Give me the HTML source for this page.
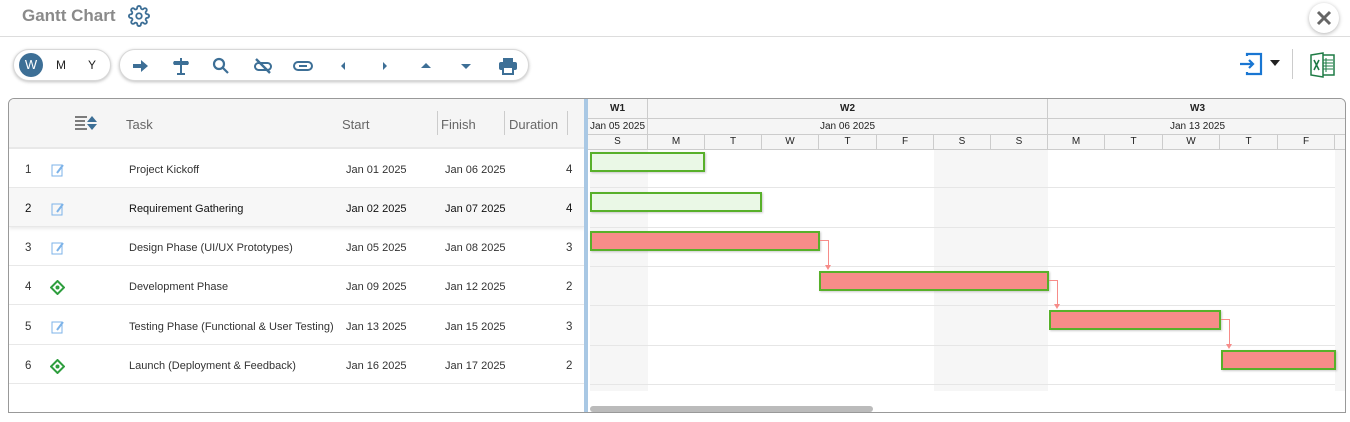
<!DOCTYPE html>
<html><head><meta charset="utf-8"><style>
*{box-sizing:border-box;margin:0;padding:0}
body{width:1350px;height:422px;background:#fff;font-family:"Liberation Sans",sans-serif;position:relative;overflow:hidden;color:#333}
.abs{position:absolute}
.title{left:22px;top:6px;font-size:17px;font-weight:bold;color:#8a8a8a}
.hline{left:0;top:36px;width:1350px;height:1px;background:#ddd}
.pill{top:49px;height:32px;border:1px solid #d8d8d8;border-radius:16px;box-shadow:0 1px 3px rgba(0,0,0,.25);background:#fff}
.ic{position:absolute;top:7px}
.grid{left:8px;top:98px;width:1338px;height:315px;border:1px solid #999;border-radius:6px 6px 0 0;overflow:hidden}
.lhdr{left:0;top:0;width:576px;height:50px;background:#f5f5f5;border-bottom:2px solid #e8e8e8}
.hd{position:absolute;top:18px;font-size:13px;color:#666}
.row{position:absolute;left:0;width:576px;height:39px;border-bottom:1px solid #e8e8e8;font-size:11.5px;color:#333}
.row span{position:absolute;top:15px}
.row span.t{font-size:11px;top:15px}
.ch{position:absolute;font-size:10px;color:#222;text-align:center;border-right:1px solid #ccc;border-bottom:1px solid #ccc;background:#f5f5f5}
.bar{position:absolute;height:20px;border:2px solid #58b02a;box-shadow:1px 1px 2px rgba(0,0,0,.2)}
.g{background:#eaf8e6}.r{background:#f78c89}
.lk{position:absolute;background:#f78c89}
.ah{position:absolute;width:0;height:0;border-left:3px solid transparent;border-right:3px solid transparent;border-top:5px solid #f78c89}
</style></head><body>
<div class="abs title">Gantt Chart</div>
<svg class="abs" style="left:128px;top:5px" width="22" height="22" viewBox="0 0 24 24" fill="none" stroke="#3d6f96" stroke-width="2"><circle cx="12" cy="12" r="3"/><path d="M19.4 15a1.7 1.7 0 0 0 .3 1.8l.1.1a2 2 0 1 1-2.8 2.8l-.1-.1a1.7 1.7 0 0 0-1.8-.3 1.7 1.7 0 0 0-1 1.5V21a2 2 0 1 1-4 0v-.1a1.7 1.7 0 0 0-1.1-1.5 1.7 1.7 0 0 0-1.8.3l-.1.1a2 2 0 1 1-2.8-2.8l.1-.1a1.7 1.7 0 0 0 .3-1.8 1.7 1.7 0 0 0-1.5-1H3a2 2 0 1 1 0-4h.1a1.7 1.7 0 0 0 1.5-1.100 1.7 1.7 0 0 0-.3-1.8l-.1-.1a2 2 0 1 1 2.8-2.8l.1.1a1.7 1.7 0 0 0 1.8.3H9a1.7 1.7 0 0 0 1-1.5V3a2 2 0 1 1 4 0v.1a1.7 1.7 0 0 0 1 1.5 1.7 1.7 0 0 0 1.8-.3l.1-.1a2 2 0 1 1 2.8 2.8l-.1.1a1.7 1.7 0 0 0-.3 1.8V9a1.7 1.7 0 0 0 1.5 1H21a2 2 0 1 1 0 4h-.1a1.7 1.7 0 0 0-1.5 1z"/></svg>
<div class="abs" style="left:1309px;top:3px;width:30px;height:30px;border-radius:15px;background:#fff;box-shadow:0 1px 4px rgba(0,0,0,.3)"><svg width="30" height="30"><path d="M9 9l12 12M21 9L9 21" stroke="#666" stroke-width="3"/></svg></div>
<div class="abs hline"></div>

<div class="abs pill" style="left:13px;width:98px">
<div class="abs" style="left:5px;top:3px;width:24px;height:24px;border-radius:12px;background:#3d6f96;color:#fff;font-size:13px;text-align:center;line-height:24px">W</div>
<div class="abs" style="left:42px;top:8px;font-size:12px;color:#222">M</div>
<div class="abs" style="left:74px;top:8px;font-size:12px;color:#222">Y</div>
</div>
<div class="abs pill" style="left:119px;width:410px">
<svg class="ic" style="left:12px" width="18" height="18" viewBox="0 0 18 18"><path d="M1 7h8V3l7 6-7 6v-4H1z" fill="#3d6f96"/></svg>
<svg class="ic" style="left:52px" width="18" height="18" viewBox="0 0 18 18"><path d="M8 1h2v3h6l1 2-1 2h-6v9H8V8H2L1 6l1-2h6z" fill="#3d6f96"/><rect x="5" y="16" width="8" height="2" fill="#3d6f96"/></svg>
<svg class="ic" style="left:92px" width="18" height="18" viewBox="0 0 18 18" fill="none" stroke="#3d6f96" stroke-width="2.2"><circle cx="7" cy="7" r="5"/><path d="M11 11l5 5"/></svg>
<svg class="ic" style="left:133px" width="20" height="18" viewBox="0 0 20 18" fill="none" stroke="#3d6f96" stroke-width="2"><rect x="2" y="6" width="16" height="7" rx="3.5"/><path d="M3 2l14 14" stroke-width="2.4"/></svg>
<svg class="ic" style="left:173px" width="20" height="18" viewBox="0 0 20 18" fill="none" stroke="#3d6f96" stroke-width="2"><rect x="1" y="5" width="18" height="8" rx="4"/><path d="M6 9h8"/></svg>
<svg class="ic" style="left:219px" width="8" height="18"><path d="M6 5v8L2 9z" fill="#3d6f96"/></svg>
<svg class="ic" style="left:261px" width="8" height="18"><path d="M2 5v8l4-4z" fill="#3d6f96"/></svg>
<svg class="ic" style="left:300px" width="12" height="18"><path d="M1 11h10L6 6z" fill="#3d6f96"/></svg>
<svg class="ic" style="left:340px" width="12" height="18"><path d="M1 7h10l-5 5z" fill="#3d6f96"/></svg>
<svg class="ic" style="left:378px" width="20" height="18" viewBox="0 0 20 18"><rect x="5" y="1" width="10" height="4" fill="#3d6f96"/><rect x="1" y="5" width="18" height="8" rx="2" fill="#3d6f96"/><rect x="5" y="10" width="10" height="7" fill="#fff" stroke="#3d6f96" stroke-width="2"/></svg>
</div>

<svg class="abs" style="left:1238px;top:52px" width="26" height="24" viewBox="0 0 26 24" fill="none" stroke="#1976d2" stroke-width="2.2"><path d="M9 4V2h14v20H9v-2"/><path d="M2 12h13M11 8l4 4-4 4"/></svg>
<svg class="abs" style="left:1269px;top:59px" width="12" height="8"><path d="M1 1h10L6 7z" fill="#222"/></svg>
<div class="abs" style="left:1292px;top:49px;width:1px;height:30px;background:#ccc"></div>
<svg class="abs" style="left:1310px;top:52px" width="26" height="26" viewBox="0 0 26 26"><rect x="8" y="3" width="16" height="20" fill="#fff" stroke="#1e7b45" stroke-width="1.5"/><path d="M16 6v14M11 8h12M11 11h12M11 14h12M11 17h12" stroke="#1e7b45" stroke-width="1"/><path d="M1 3l12-2v24L1 23z" fill="#fff" stroke="#1e7b45" stroke-width="1.5"/><path d="M4 8l5 10M9 8l-5 10" stroke="#1e7b45" stroke-width="1.6"/></svg>

<div class="abs grid">
<div class="abs lhdr">
<svg class="abs" style="left:66px;top:16px" width="22" height="16" viewBox="0 0 22 16"><path d="M0 2h12M0 6h10M0 10h10M0 14h12" stroke="#555" stroke-width="1.5"/><path d="M12 7l5-6 5 6zM12 9l5 6 5-6z" fill="#3d6f96"/></svg>
<div class="hd" style="left:117px">Task</div>
<div class="hd" style="left:333px">Start</div>
<div class="abs" style="left:428px;top:12px;width:1px;height:24px;background:#ccc"></div>
<div class="hd" style="left:432px">Finish</div>
<div class="abs" style="left:495px;top:12px;width:1px;height:24px;background:#ccc"></div>
<div class="hd" style="left:500px">Duration</div>
<div class="abs" style="left:558px;top:12px;width:1px;height:24px;background:#ccc"></div>
</div>
<div class="row" style="top:50px"><span style="left:16px">1</span><svg class="abs" style="left:42px;top:14px" width="14" height="14"><rect x="1" y="2" width="10" height="11" fill="none" stroke="#7db3e8"/><path d="M6 10l6-8" stroke="#7db3e8" stroke-width="2"/></svg><span class="t" style="left:120px">Project Kickoff</span><span class="t" style="left:337px">Jan 01 2025</span><span class="t" style="left:436px">Jan 06 2025</span><span style="left:557px">4</span></div>
<div class="row" style="top:89px;background:#f7f7f7;color:#111;box-shadow:0 2px 3px rgba(0,0,0,.08)"><span style="left:16px">2</span><svg class="abs" style="left:42px;top:14px" width="14" height="14"><rect x="1" y="2" width="10" height="11" fill="none" stroke="#7db3e8"/><path d="M6 10l6-8" stroke="#7db3e8" stroke-width="2"/></svg><span class="t" style="left:120px">Requirement Gathering</span><span class="t" style="left:337px">Jan 02 2025</span><span class="t" style="left:436px">Jan 07 2025</span><span style="left:557px">4</span></div>
<div class="row" style="top:128px"><span style="left:16px">3</span><svg class="abs" style="left:42px;top:14px" width="14" height="14"><rect x="1" y="2" width="10" height="11" fill="none" stroke="#7db3e8"/><path d="M6 10l6-8" stroke="#7db3e8" stroke-width="2"/></svg><span class="t" style="left:120px">Design Phase (UI/UX Prototypes)</span><span class="t" style="left:337px">Jan 05 2025</span><span class="t" style="left:436px">Jan 08 2025</span><span style="left:557px">3</span></div>
<div class="row" style="top:167px"><span style="left:16px">4</span><svg class="abs" style="left:41px;top:14px" width="15" height="15"><path d="M7.5 1l6.5 6.5-6.5 6.5L1 7.5z" fill="none" stroke="#2e9e3e" stroke-width="2"/><circle cx="7.5" cy="7.5" r="2" fill="#2e9e3e"/></svg><span class="t" style="left:120px">Development Phase</span><span class="t" style="left:337px">Jan 09 2025</span><span class="t" style="left:436px">Jan 12 2025</span><span style="left:557px">2</span></div>
<div class="row" style="top:207px"><span style="left:16px">5</span><svg class="abs" style="left:42px;top:14px" width="14" height="14"><rect x="1" y="2" width="10" height="11" fill="none" stroke="#7db3e8"/><path d="M6 10l6-8" stroke="#7db3e8" stroke-width="2"/></svg><span class="t" style="left:120px">Testing Phase (Functional &amp; User Testing)</span><span class="t" style="left:337px">Jan 13 2025</span><span class="t" style="left:436px">Jan 15 2025</span><span style="left:557px">3</span></div>
<div class="row" style="top:246px"><span style="left:16px">6</span><svg class="abs" style="left:41px;top:14px" width="15" height="15"><path d="M7.5 1l6.5 6.5-6.5 6.5L1 7.5z" fill="none" stroke="#2e9e3e" stroke-width="2"/><circle cx="7.5" cy="7.5" r="2" fill="#2e9e3e"/></svg><span class="t" style="left:120px">Launch (Deployment &amp; Feedback)</span><span class="t" style="left:337px">Jan 16 2025</span><span class="t" style="left:436px">Jan 17 2025</span><span style="left:557px">2</span></div>

<div class="abs" style="left:575px;top:0;width:4px;height:315px;background:#a9c8e4"></div>
<div class="abs" style="left:579px;top:0;width:760px;height:315px">
<div class="abs" style="left:2px;top:50px;width:58px;height:242px;background:#f6f6f6"></div>
<div class="abs" style="left:346px;top:50px;width:114px;height:242px;background:#f6f6f6"></div>
<div class="abs" style="left:747px;top:50px;width:13px;height:242px;background:#f6f6f6"></div>
<div class="ch" style="left:0;top:0;width:60px;height:20px;line-height:19px;font-weight:bold">W1</div>
<div class="ch" style="left:60px;top:0;width:400px;height:20px;line-height:19px;font-weight:bold">W2</div>
<div class="ch" style="left:460px;top:0;width:300px;height:20px;line-height:19px;font-weight:bold">W3</div>
<div class="ch" style="left:0;top:20px;width:60px;height:16px;line-height:15px">Jan 05 2025</div>
<div class="ch" style="left:60px;top:20px;width:400px;height:16px;line-height:15px">Jan 06 2025</div>
<div class="ch" style="left:460px;top:20px;width:300px;height:16px;line-height:15px">Jan 13 2025</div>
<div class="ch" style="left:0;top:36px;width:60px;height:15px;line-height:14px">S</div>
<div class="ch" style="left:60px;top:36px;width:57px;height:15px;line-height:14px">M</div>
<div class="ch" style="left:117px;top:36px;width:57px;height:15px;line-height:14px">T</div>
<div class="ch" style="left:174px;top:36px;width:57px;height:15px;line-height:14px">W</div>
<div class="ch" style="left:231px;top:36px;width:58px;height:15px;line-height:14px">T</div>
<div class="ch" style="left:289px;top:36px;width:57px;height:15px;line-height:14px">F</div>
<div class="ch" style="left:346px;top:36px;width:57px;height:15px;line-height:14px">S</div>
<div class="ch" style="left:403px;top:36px;width:57px;height:15px;line-height:14px">S</div>
<div class="ch" style="left:460px;top:36px;width:57px;height:15px;line-height:14px">M</div>
<div class="ch" style="left:517px;top:36px;width:58px;height:15px;line-height:14px">T</div>
<div class="ch" style="left:575px;top:36px;width:57px;height:15px;line-height:14px">W</div>
<div class="ch" style="left:632px;top:36px;width:58px;height:15px;line-height:14px">T</div>
<div class="ch" style="left:690px;top:36px;width:57px;height:15px;line-height:14px">F</div>
<div class="ch" style="left:747px;top:36px;width:13px;height:15px"></div>
<div class="abs" style="left:2px;top:88px;width:745px;height:1px;background:#e6e6e6"></div>
<div class="abs" style="left:2px;top:128px;width:745px;height:1px;background:#e6e6e6"></div>
<div class="abs" style="left:2px;top:167px;width:745px;height:1px;background:#e6e6e6"></div>
<div class="abs" style="left:2px;top:206px;width:745px;height:1px;background:#e6e6e6"></div>
<div class="abs" style="left:2px;top:246px;width:745px;height:1px;background:#e6e6e6"></div>
<div class="abs" style="left:2px;top:285px;width:745px;height:1px;background:#e6e6e6"></div>
<div class="bar g" style="left:2px;top:53px;width:115px"></div>
<div class="bar g" style="left:2px;top:93px;width:172px"></div>
<div class="bar r" style="left:2px;top:132px;width:230px"></div>
<div class="bar r" style="left:231px;top:172px;width:230px"></div>
<div class="bar r" style="left:461px;top:211px;width:172px"></div>
<div class="bar r" style="left:633px;top:251px;width:115px"></div>
<div class="lk" style="left:232px;top:141px;width:9px;height:1px"></div><div class="lk" style="left:240px;top:141px;width:1px;height:27px"></div><div class="ah" style="left:237px;top:166px"></div>
<div class="lk" style="left:461px;top:181px;width:9px;height:1px"></div><div class="lk" style="left:469px;top:181px;width:1px;height:26px"></div><div class="ah" style="left:466px;top:205px"></div>
<div class="lk" style="left:633px;top:220px;width:9px;height:1px"></div><div class="lk" style="left:641px;top:220px;width:1px;height:27px"></div><div class="ah" style="left:638px;top:245px"></div>
<div class="abs" style="left:2px;top:307px;width:283px;height:6px;border-radius:3px;background:#bbb"></div>
</div>
</div>
</body></html>
